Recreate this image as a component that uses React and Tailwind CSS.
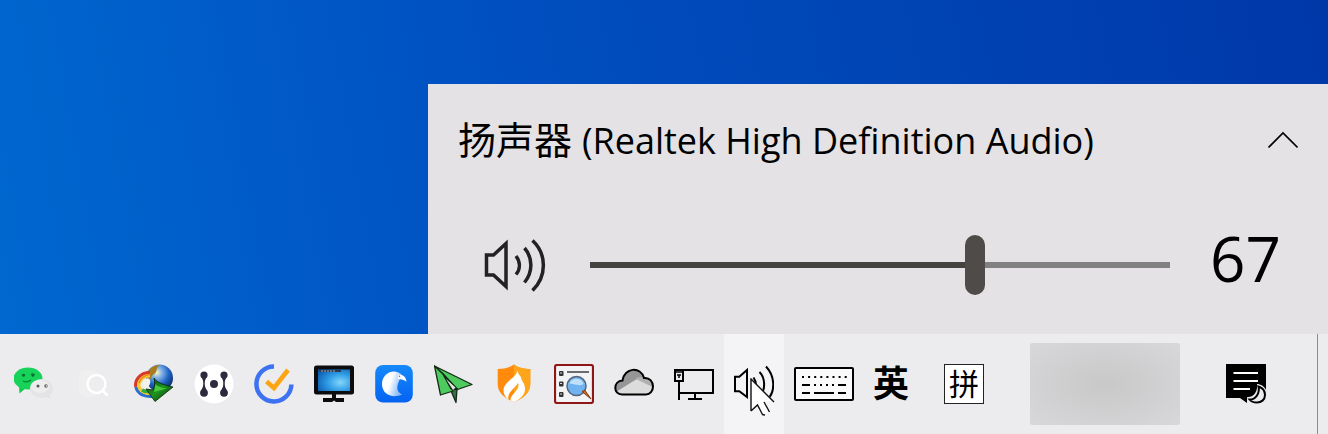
import { useState } from 'react';

function WeChatIcon() {
  return (
    <svg viewBox="0 0 40 40" className="size-10">
      <path d="M5 22 L5.500 29.500 L12 24 Z" fill="#12c94e" />
      <ellipse cx="14" cy="14.500" rx="14.500" ry="11" fill="#18d35a" />
      <path d="M8 11.500 q1.500 -2 3 0 M17 11 q2 -2 3.500 0 M9 17 q4 2 8 -1" fill="none" stroke="#0b8136" strokeWidth="1.300" />
      <circle cx="9.500" cy="11.500" r="1.300" fill="#0b6b2e" />
      <circle cx="19" cy="11.500" r="1.300" fill="#0b6b2e" />
      <ellipse cx="27.500" cy="24.500" rx="11.500" ry="9.500" fill="#e4e4e6" />
      <ellipse cx="26" cy="22.500" rx="9" ry="6.500" fill="#ededee" />
      <path d="M31 32 L37 35 L35 29 Z" fill="#e2e2e4" />
      <circle cx="24" cy="22" r="1.500" fill="#555" />
      <circle cx="32" cy="22" r="1.700" fill="#555" />
      <circle cx="32.400" cy="22" r=".8" fill="#fff" />
    </svg>
  );
}

function SearchIcon() {
  return (
    <svg viewBox="0 0 40 40" className="size-10">
      <rect x="5" y="6" width="20" height="27" rx="7" fill="#f0eff0" />
      <circle cx="22.500" cy="20" r="9" fill="#edecee" stroke="#fff" strokeWidth="2.500" />
      <path d="M29 27 L33 31" stroke="#fff" strokeWidth="2.500" strokeLinecap="round" />
    </svg>
  );
}

function DownloadManagerIcon() {
  return (
    <svg viewBox="0 0 40 40" className="size-10">
      <defs>
        <radialGradient id="globe" cx=".4" cy=".3" r=".75">
          <stop offset="0" stopColor="#fbf6c0" />
          <stop offset=".25" stopColor="#86b4e6" />
          <stop offset=".6" stopColor="#1f62c4" />
          <stop offset="1" stopColor="#0a2558" />
        </radialGradient>
        <linearGradient id="arrow" x1="0" y1="0" x2="1" y2="1">
          <stop offset="0" stopColor="#0a3d0c" />
          <stop offset=".5" stopColor="#1f9420" />
          <stop offset="1" stopColor="#052a08" />
        </linearGradient>
      </defs>
      <circle cx="25.500" cy="14" r="13.500" fill="url(#globe)" />
      <path d="M13 10 C15 4 20 1 26 1 C21 4 24 8 20 10 C17 12 16 16 15 19 C13 17 12 13 13 10Z" fill="#a87c22" />
      <g fill="none" strokeWidth="3.400">
        <path d="M16 8.500 C6 9 .5 16 2 23" stroke="#d8382a" />
        <path d="M2 23 C3.500 30 11 33.500 21 32" stroke="#2b6fd0" />
        <path d="M16 11.500 C8 12 3.500 18 5 23 C7 28.500 13 30 20 29" stroke="#f5c92c" />
        <path d="M8 26 C11 28 15 28 19 27" stroke="#2fae3e" />
        <path d="M5 19 C6 14 11 11 16 10.500" stroke="#f0872a" strokeWidth="1.500" />
      </g>
      <ellipse cx="12.500" cy="19" rx="3.500" ry="5" fill="#f4f0ea" transform="rotate(25 12.500 19)" />
      <path d="M20 14 C23 19 30 21 39 23 L21 37.500 L12 25 L19 26 C21 22 21 18 20 14Z" fill="url(#arrow)" stroke="#052708" strokeWidth=".8" />
      <path d="M21.500 20 C24 23 29 24 33 24.500 L20 28 Z" fill="#46c93b" />
    </svg>
  );
}

function NodesIcon() {
  return (
    <svg viewBox="0 0 40 40" className="size-10">
      <circle cx="20" cy="20" r="19.500" fill="#fff" />
      <path d="M10 11 V29 M30 11 V29" stroke="#2b2b3d" strokeWidth="1.500" />
      <path d="M7.500 26 L10 20 L12.500 26Z M27.500 26 L30 20 L32.500 26Z M7.500 13 L10 19 L12.500 13Z M27.500 13 L30 19 L32.500 13Z" fill="#2b2b3d" />
      <g fill="#2b2b3d">
        <circle cx="10" cy="11" r="3.600" />
        <circle cx="30" cy="11" r="3.600" />
        <circle cx="10" cy="28.800" r="3.900" />
        <circle cx="30" cy="28.800" r="3.900" />
        <circle cx="20" cy="20" r="4" />
      </g>
    </svg>
  );
}

function TickIcon() {
  return (
    <svg viewBox="0 0 40 40" className="size-10">
      <path d="M20 2.500 A17.500 17.500 0 1 0 37.400 20.500" fill="none" stroke="#3d72f2" strokeWidth="4.500" />
      <path d="M12.500 17.500 L20 24 L34 6" fill="none" stroke="#fba414" strokeWidth="4.600" />
    </svg>
  );
}

function MonitorIcon() {
  return (
    <svg viewBox="0 0 40 40" className="size-10">
      <defs>
        <radialGradient id="screen" cx=".7" cy=".6" r=".8">
          <stop offset="0" stopColor="#84d6fa" />
          <stop offset=".5" stopColor="#2f9ce6" />
          <stop offset="1" stopColor="#0d5cb0" />
        </radialGradient>
      </defs>
      <rect x="0" y="1.500" width="40" height="29" rx="2.500" fill="#0c0c0d" />
      <rect x="4" y="5.500" width="32" height="21.500" fill="url(#screen)" />
      <path d="M5 7 H27" stroke="#2b3b55" strokeWidth="2" />
      <path d="M7 7 H22" stroke="#b8cfe0" strokeWidth=".8" strokeDasharray="2 1" />
      <path d="M18 30 H22 V34 H30 V38 H22 L20 36.500 L18 38 H9 V34 H18 Z" fill="#0c0c0d" />
    </svg>
  );
}

function BirdIcon() {
  return (
    <svg viewBox="0 0 40 40" className="size-10">
      <defs>
        <linearGradient id="sky" x1="0" y1="0" x2="0" y2="1">
          <stop offset="0" stopColor="#1689fa" />
          <stop offset="1" stopColor="#0363f2" />
        </linearGradient>
        <linearGradient id="wing" x1="0" y1="0" x2="1" y2=".4">
          <stop offset=".5" stopColor="#fff" />
          <stop offset="1" stopColor="#8cbcf8" />
        </linearGradient>
      </defs>
      <rect x="1.200" y="1" width="37.600" height="37.600" rx="8" fill="url(#sky)" />
      <path d="M27 10 C20 4 8 9 8 20 C8 30 18 35 28 30.500 C23 28 22 24 25 17 C26 14 28 13 27 10Z" fill="url(#wing)" />
      <path d="M24 11 C28 10 32 12 32.500 18 C30 15 27 16 24 15Z" fill="#fff" />
      <circle cx="25.500" cy="12.300" r=".8" fill="#1b6fe8" />
    </svg>
  );
}

function PlaneIcon() {
  return (
    <svg viewBox="0 0 40 40" className="size-10">
      <g stroke="#152a18" strokeWidth="1.300" strokeLinejoin="round">
        <path d="M17.500 28 L22 38.500 L23 25 L18 22Z" fill="#3c6b4c" />
        <path d="M.5 2 L38 20.500 L23.500 25.500 L9 10Z" fill="#4ecb5e" />
        <path d="M.5 2 L6.500 31 L19 27 L9 10Z" fill="#4ecb5e" />
        <path d="M9 10 L17 25 L23.500 25.500Z" fill="#23302a" />
        <path d="M12 15 L19 26 L21.500 23.500Z" fill="#dfe6e0" stroke="none" />
      </g>
    </svg>
  );
}

function ShieldIcon() {
  return (
    <svg viewBox="0 0 40 40" className="size-10">
      <path d="M20 .5 C25 4 30 5 36.300 5 V20 C36.300 29 29 34.500 20 38 C11 34.500 3.700 29 3.700 20 V5 C10 5 15 4 20 .5Z" fill="#ff8a0c" />
      <path d="M20 .5 C25 4 30 5 36.300 5 V20 C36.300 29 29 34.500 20 38Z" fill="#ffa51c" />
      <path d="M23 6 C24 13 10 17 9.500 26 C9.500 30 11 33 14.500 35.500 C13 29 19 26 24 19 C27 26 16 30 16.500 36.500 L20 38 C26 35.500 31 31 31 25 C31 19 27 17 27 13 C25 11 24 9 23 6Z" fill="#fff" />
    </svg>
  );
}

function EverythingIcon() {
  return (
    <svg viewBox="0 0 40 40" className="size-10">
      <rect x="1" y="1" width="38" height="38" rx="2" fill="#f1f3f5" stroke="#8d1717" strokeWidth="2.200" />
      <path d="M13 8 H35" stroke="#222" strokeWidth="1.300" />
      <g fill="#333">
        <rect x="5" y="7" width="4.500" height="5" rx="1" />
        <rect x="5" y="17.500" width="4.500" height="5" rx="1" />
        <rect x="5" y="28" width="4.500" height="5" rx="1" />
      </g>
      <path d="M6 9 H8 M6 19.500 H8 M6 30 H8" stroke="#ddd" strokeWidth="1" />
      <circle cx="22.500" cy="22" r="9.500" fill="#6fb4f0" stroke="#56637a" strokeWidth="1.500" />
      <path d="M15.500 20 C17 13 28 13 29.500 20 C25 23 19 19 15.500 20Z" fill="#bfe0fb" />
      <path d="M28 27.500 L31 26.500 L37 35 Z" fill="#e0701f" stroke="#7b3310" strokeWidth="1" />
    </svg>
  );
}

function CloudIcon() {
  return (
    <svg viewBox="0 0 40 40" className="size-10">
      <path d="M8 30.500 C-1 30.500 -1 17 8.500 16.500 C10 3.500 27 2 30 14 C36 13.500 39 18 39 22.500 C39 27 36 30.500 32 30.500Z" fill="#dcdcdd" />
      <path d="M3 26.500 C-1 21 3 16.500 8.500 16.500 C10 3.500 27 2 30 14 L22 15.500 L3.500 27Z" fill="#969696" />
      <path d="M22 14 C26 12 36 12 38.500 20 V23 L22 15Z" fill="#b0b0b0" />
      <path d="M8 30.500 C-1 30.500 -1 17 8.500 16.500 C10 3.500 27 2 30 14 C36 13.500 39 18 39 22.500 C39 27 36 30.500 32 30.500Z" fill="none" stroke="#000" strokeWidth="2" />
    </svg>
  );
}

function NetworkIcon() {
  return (
    <svg viewBox="0 0 40 40" className="size-10" fill="none" stroke="#000" strokeWidth="2">
      <path d="M9 6 H39 V29 H5.500 M5 17 V36 M21 29 V35 M14 35 H28" />
      <rect x="1" y="6" width="8" height="11" />
      <path d="M1 8 H9 M3 11 H7 M5 11 V14" strokeWidth="1.500" />
    </svg>
  );
}

function VolumeIcon() {
  return (
    <svg viewBox="0 0 40 40" className="size-10" fill="none" stroke="#000" strokeWidth="2">
      <path d="M1 12.700 H5.300 L13 6 V33 L5.300 27.300 H1Z" />
      <path d="M19.500 13.500 C22 17 22.500 21 21 25 M25.500 8 C31.500 14 31.500 26 26.500 31 M32 2.500 C41 12 41.500 27 34 35" />
    </svg>
  );
}

function Cursor() {
  return (
    <svg viewBox="0 0 26 40" className="absolute left-[26px] top-11 h-10 w-[26px]">
      <path d="M1 1 L24 23 H14 L19 34 L13 37 L8 27 L1 33Z" fill="#fff" />
      <path d="M1 33 V1 L24 24 M1 33 L7.500 27 L12.500 36.500 M14 24 L19.500 34 M12 36.500 L15 37" fill="none" stroke="#111" strokeWidth="1.400" />
    </svg>
  );
}

function KeyboardIcon() {
  return (
    <svg viewBox="0 0 60 36" className="h-9 w-[60px]">
      <rect x="1" y="2" width="58" height="32" rx="1" fill="#fafafa" stroke="#000" strokeWidth="2" />
      <g stroke="#000" strokeWidth="2">
        <path d="M8 11 H53" strokeDasharray="2 4.100" />
        <path d="M8 19 H16 M20 19 h2 M26 19 h2 M32 19 h2 M38 19 h2 M44 19 H52" />
        <path d="M8 27 H16 M20 27 H40 M44 27 H52" />
      </g>
    </svg>
  );
}

function NotificationIcon() {
  return (
    <svg viewBox="0 0 40 40" className="size-10">
      <path d="M0 0 H40 V34 H21 V39 L14 34 H0Z" fill="#000" />
      <path d="M7.500 9 H32 M7.500 17 H32 M7.500 25 H24" stroke="#fff" strokeWidth="2" />
      <path d="M31 20 C36 20 41 24 41 31 C41 37 37 40 31 40 C26 40 22 38 21 33 C27 34 32 28 31 20Z" fill="#ececee" />
      <path d="M32.500 22.500 C37 24 39 27 39 31 C39 36 35 38.500 31 38.500 C28 38.500 25 37.500 23.500 35.500 C30 35.500 34 29 32.500 22.500Z" fill="#ececee" stroke="#000" strokeWidth="2" />
    </svg>
  );
}

const trayApps = [
  { name: '微信', icon: WeChatIcon },
  { name: '搜索', icon: SearchIcon },
  { name: '下载', icon: DownloadManagerIcon },
  { name: '节点', icon: NodesIcon },
  { name: '清单', icon: TickIcon },
  { name: '显示', icon: MonitorIcon },
  { name: '浏览器', icon: BirdIcon },
  { name: '纸飞机', icon: PlaneIcon },
  { name: '安全', icon: ShieldIcon },
  { name: '文件搜索', icon: EverythingIcon },
  { name: '云盘', icon: CloudIcon },
  { name: '网络', icon: NetworkIcon },
];

function TrayButton({ label, className = 'w-[60px]', children }) {
  return (
    <button
      type="button"
      aria-label={label}
      className={`relative flex h-full shrink-0 items-center justify-center ${className}`}
    >
      {children}
    </button>
  );
}

function VolumePanel() {
  const [volume, setVolume] = useState(67);

  return (
    <section className="w-[900px] bg-[#e4e2e4] px-[30px] pt-7 pb-9">
      <div className="flex h-14 items-center justify-between">
        <h1 className="text-[38px] leading-14 whitespace-nowrap text-black">
          扬声器 <span className="text-[36px]">(Realtek High Definition Audio)</span>
        </h1>
        <button type="button" aria-label="展开" className="flex h-14 items-center">
          <svg viewBox="0 0 30 18" className="h-[18px] w-[30px]">
            <path d="M.5 16.500 L15 2 L29.500 16.500" fill="none" stroke="#000" strokeWidth="1.600" />
          </svg>
        </button>
      </div>

      <div className="mt-16 flex h-[66px] items-center pr-[18px] pl-[25px]">
        <button type="button" aria-label="静音" className="shrink-0">
          <svg viewBox="0 0 64 56" className="h-14 w-16" fill="none" stroke="#222" strokeWidth="3.500">
            <path d="M3.500 18 H10.500 L23 6.500 V49.500 L10.500 38 H3.500Z" />
            <path d="M33 19 C37.500 25 37.500 32 33 37.500 M41.500 11 C50 21 50 35 41.500 45.500 M49.500 3.500 C64 17 64 39 49.500 53.500" />
          </svg>
        </button>
        <input
          type="range"
          aria-label="音量"
          min={0}
          max={100}
          value={volume}
          onChange={(e) => setVolume(Number(e.target.value))}
          className="mr-10 ml-[43px] h-[60px] min-w-0 flex-1 cursor-pointer appearance-none bg-[length:100%_6px] bg-center bg-no-repeat [&::-webkit-slider-thumb]:h-[60px] [&::-webkit-slider-thumb]:w-5 [&::-webkit-slider-thumb]:appearance-none [&::-webkit-slider-thumb]:rounded-full [&::-webkit-slider-thumb]:bg-[#4e4b48]"
          style={{
            backgroundImage: `linear-gradient(to right, #454340 ${volume}%, #828182 ${volume}%)`,
          }}
        />
        <output className="w-[70px] pb-3.5 text-right text-[62px] leading-16 text-black">{volume}</output>
      </div>
    </section>
  );
}

function Taskbar() {
  return (
    <footer className="flex h-[100px] items-center bg-[#ecebed] pl-1">
      {trayApps.map(({ name, icon: Icon }) => (
        <TrayButton key={name} label={name}>
          <Icon />
        </TrayButton>
      ))}
      <TrayButton label="扬声器" className="w-[60px] bg-[#f4f3f6]">
        <VolumeIcon />
        <Cursor />
      </TrayButton>
      <TrayButton label="触摸键盘" className="w-20">
        <KeyboardIcon />
      </TrayButton>
      <TrayButton label="输入语言" className="w-[54px]">
        <span className="text-[36px] leading-10 font-bold text-black">英</span>
      </TrayButton>
      <TrayButton label="输入法" className="w-[92px]">
        <span className="flex size-10 items-center justify-center border border-[#222] bg-white text-[30px] leading-9 text-black">
          拼
        </span>
      </TrayButton>
      <div className="ml-auto h-[82px] w-[150px] shrink-0 rounded-xs bg-radial from-[#c8c8c9] to-[#d8d7d9]" />
      <TrayButton label="通知" className="w-[132px]">
        <NotificationIcon />
      </TrayButton>
      <button type="button" aria-label="显示桌面" className="ml-[5px] h-full w-[11px] border-l border-[#8c8c8e]" />
    </footer>
  );
}

export default function App() {
  return (
    <div className="flex min-h-screen flex-col bg-[#0050c2] font-['Open_Sans','Noto_Sans_CJK_SC',sans-serif]">
      <main className="flex flex-1 items-end justify-end bg-linear-[80deg] from-[#0068d0] via-[#004fc0] via-40% to-[#0038a8] pt-[84px]">
        <VolumePanel />
      </main>
      <Taskbar />
    </div>
  );
}
